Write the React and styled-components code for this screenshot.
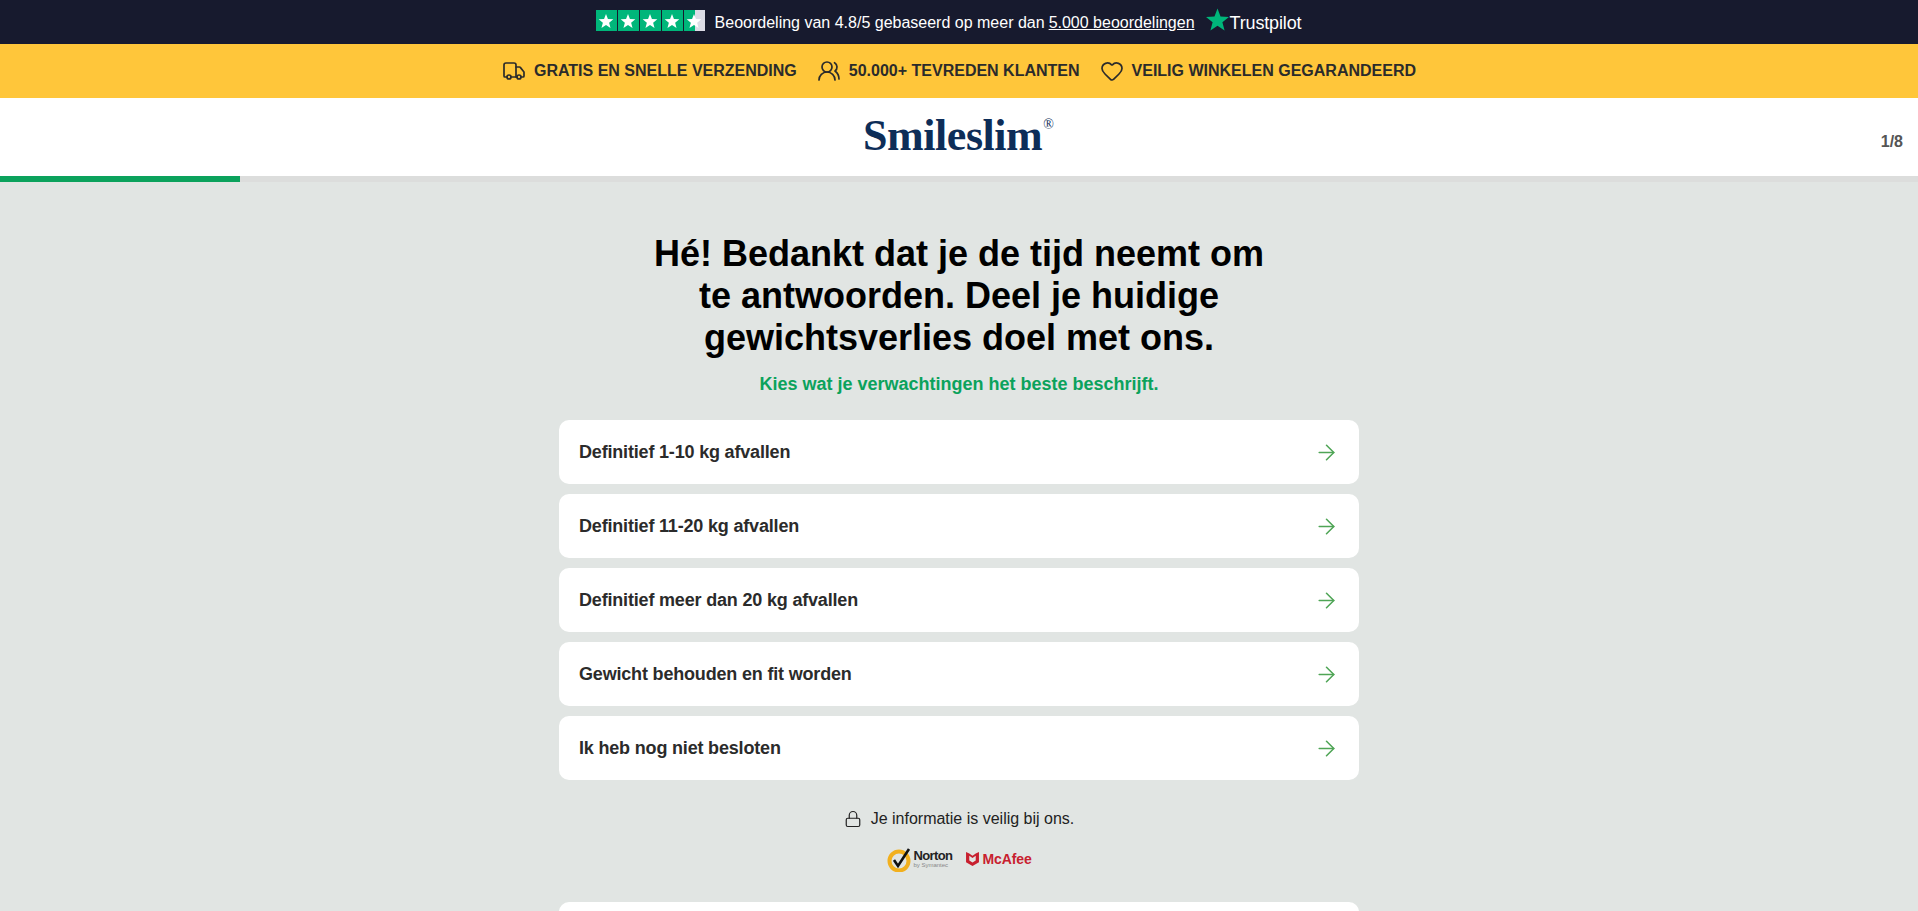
import React from 'react';
import styled, { createGlobalStyle } from 'styled-components';
import { ArrowRight, Heart, Lock, Truck, UsersRound } from 'lucide-react';

const GlobalStyle = createGlobalStyle`
  html, body {
    margin: 0;
    height: 100%;
    overflow: hidden;
    background: #e1e5e3;
    font-family: "Liberation Sans", Arial, sans-serif;
  }
`;

const RatingBar = styled.div`
  height: 44px;
  background: #171a2e;
  color: #fff;
  display: flex;
  align-items: center;
  justify-content: center;
  font-size: 16px;
  padding-top: 1px;
  box-sizing: border-box;
  padding-right: 21px;
`;

const Stars = styled.div`
  display: flex;
  gap: 1px;
  margin-right: 10px;
  margin-top: -4px;
`;

const StarBox = styled.div`
  width: 21px;
  height: 21px;
  background: ${({ $half }) =>
    $half ? 'linear-gradient(90deg, #00b67a 0 50%, #dcdce6 50% 100%)' : '#00b67a'};
  display: flex;
  align-items: center;
  justify-content: center;
`;

const ReviewLink = styled.a`
  color: #fff;
  text-decoration: underline;
  margin-left: 4px;
`;

const TrustLogo = styled.div`
  display: flex;
  align-items: flex-end;
  margin-left: 10px;
  font-size: 18px;
  letter-spacing: -0.15px;
  margin-top: -6px;
`;

const TrustWord = styled.span`
  line-height: 18px;
`;

const PerksBar = styled.div`
  height: 54px;
  background: #ffc63a;
  color: #2b2b2b;
  display: flex;
  align-items: center;
  justify-content: center;
  gap: 20px;
  font-size: 16px;
  font-weight: 700;
`;

const Perk = styled.div`
  display: flex;
  align-items: center;
  gap: 8px;
  white-space: nowrap;
`;

const Header = styled.header`
  position: relative;
  height: 78px;
  background: #fff;
  display: flex;
  align-items: center;
  justify-content: center;
`;

const Logo = styled.div`
  font-family: "Liberation Serif", "Times New Roman", serif;
  font-weight: 700;
  font-size: 44px;
  line-height: 1;
  color: #0d2d58;
  letter-spacing: -0.45px;
  margin-left: -1px;
  margin-top: -2px;
  display: flex;
`;

const Registered = styled.sup`
  font-size: 14px;
  font-weight: 400;
  line-height: 1;
  letter-spacing: 0;
  margin: 4px 0 0 1px;
`;

const StepCount = styled.span`
  position: absolute;
  right: 15px;
  top: 35px;
  font-size: 16px;
  font-weight: 700;
  color: #555;
`;

const ProgressTrack = styled.div`
  height: 6px;
  background: #dcdddc;
`;

const ProgressFill = styled.div`
  height: 100%;
  background: #0ba25c;
`;

const Main = styled.main`
  width: 800px;
  margin: 0 auto;
  padding-top: 51px;
  display: flex;
  flex-direction: column;
  align-items: center;
`;

const Title = styled.h1`
  margin: 0;
  width: 640px;
  font-size: 36px;
  line-height: 42px;
  font-weight: 700;
  text-align: center;
  color: #000;
`;

const Subtitle = styled.p`
  margin: 14px 0 0;
  font-size: 18px;
  line-height: 22px;
  font-weight: 700;
  color: #0ba25c;
`;

const Options = styled.div`
  width: 100%;
  margin-top: 25px;
  display: flex;
  flex-direction: column;
  gap: 10px;
`;

const Option = styled.button`
  height: 64px;
  width: 100%;
  flex: none;
  border: 0;
  border-radius: 10px;
  background: #fff;
  padding: 0 20px;
  display: flex;
  align-items: center;
  justify-content: space-between;
  font-family: inherit;
  font-size: 18px;
  font-weight: 700;
  letter-spacing: -0.18px;
  color: #2b2b2b;
`;

const SafeNote = styled.div`
  margin-top: 30px;
  display: flex;
  align-items: center;
  gap: 9px;
  font-size: 16px;
  color: #222;
`;

const Badges = styled.div`
  margin-top: 19px;
  display: flex;
  align-items: center;
  gap: 14px;
  height: 24px;
`;

const Norton = styled.div`
  display: flex;
  align-items: center;
`;

const NortonText = styled.div`
  margin-left: -3px;
  display: flex;
  flex-direction: column;
  font-size: 13px;
  font-weight: 700;
  line-height: 12px;
  letter-spacing: -0.6px;
  color: #222;
`;

const Symantec = styled.span`
  font-size: 6px;
  font-weight: 400;
  line-height: 6px;
  letter-spacing: 0;
  color: #888;
`;

const McAfee = styled.div`
  display: flex;
  align-items: center;
  gap: 3px;
  font-size: 14px;
  font-weight: 700;
  letter-spacing: -0.1px;
  color: #c8202f;
`;

const NextCard = styled.div`
  width: 100%;
  height: 60px;
  margin-top: 31px;
  background: #fff;
  border-radius: 10px;
  flex: none;
`;

const StarGlyph = ({ size = 16, color = '#fff' }) => (
  <svg width={size} height={size} viewBox="0 0 24 24">
    <path fill={color} d="M12 1.5l2.9 7.6 8.1.4-6.3 5.1 2.1 7.9L12 18.1l-6.8 4.4 2.1-7.9L1 9.5l8.1-.4z" />
  </svg>
);

const options = [
  'Definitief 1-10 kg afvallen',
  'Definitief 11-20 kg afvallen',
  'Definitief meer dan 20 kg afvallen',
  'Gewicht behouden en fit worden',
  'Ik heb nog niet besloten',
];

const App = () => (
  <>
    <GlobalStyle />
    <RatingBar>
      <Stars>
        {[0, 1, 2, 3, 4].map((i) => (
          <StarBox key={i} $half={i === 4}>
            <StarGlyph />
          </StarBox>
        ))}
      </Stars>
      Beoordeling van 4.8/5 gebaseerd op meer dan
      <ReviewLink>5.000 beoordelingen</ReviewLink>
      <TrustLogo>
        <StarGlyph size={25} color="#00b67a" />
        <TrustWord>Trustpilot</TrustWord>
      </TrustLogo>
    </RatingBar>
    <PerksBar>
      <Perk>
        <Truck size={24} strokeWidth={1.7} />
        GRATIS EN SNELLE VERZENDING
      </Perk>
      <Perk>
        <UsersRound size={24} strokeWidth={1.7} />
        50.000+ TEVREDEN KLANTEN
      </Perk>
      <Perk>
        <Heart size={24} strokeWidth={1.7} />
        VEILIG WINKELEN GEGARANDEERD
      </Perk>
    </PerksBar>
    <Header>
      <Logo>
        Smileslim<Registered>®</Registered>
      </Logo>
      <StepCount>1/8</StepCount>
    </Header>
    <ProgressTrack>
      <ProgressFill style={{ width: `${(1 / 8) * 100}%` }} />
    </ProgressTrack>
    <Main>
      <Title>Hé! Bedankt dat je de tijd neemt om te antwoorden. Deel je huidige gewichtsverlies doel met ons.</Title>
      <Subtitle>Kies wat je verwachtingen het beste beschrijft.</Subtitle>
      <Options>
        {options.map((label) => (
          <Option key={label}>
            {label}
            <ArrowRight size={25} strokeWidth={1.5} color="#4fa556" />
          </Option>
        ))}
      </Options>
      <SafeNote>
        <Lock size={18} strokeWidth={1.6} />
        Je informatie is veilig bij ons.
      </SafeNote>
      <Badges>
        <Norton>
          <svg width="30" height="26" viewBox="0 0 28 26">
            <circle cx="12" cy="15" r="9.5" fill="none" stroke="#f2b01e" strokeWidth="4" />
            <path d="M7 14l4 6L22 3" fill="none" stroke="#111" strokeWidth="2.6" />
          </svg>
          <NortonText>
            Norton
            <Symantec>by Symantec</Symantec>
          </NortonText>
        </Norton>
        <McAfee>
          <svg width="13" height="14" viewBox="0 0 12 13">
            <path fill="#c8202f" d="M0 0l3 1.5v6.5l3 1.8 3-1.8V1.5L12 0v9.5L6 13 0 9.5z M3 1.5L6 3.5 9 1.5v2L6 5.5 3 3.5z" />
          </svg>
          McAfee
        </McAfee>
      </Badges>
      <NextCard />
    </Main>
  </>
);

export default App;
